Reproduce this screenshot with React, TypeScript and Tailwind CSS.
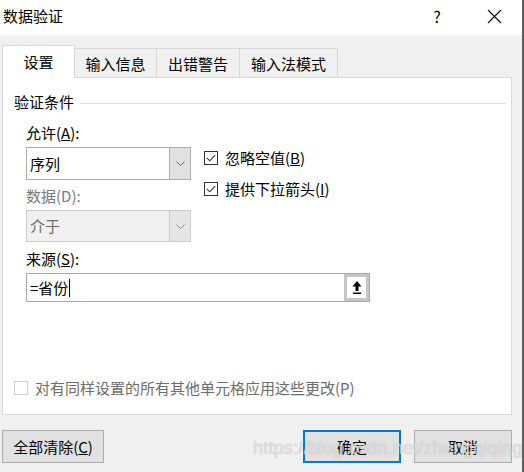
import React from "react"

function Check({ checked, disabled }: { checked?: boolean; disabled?: boolean }) {
  return (
    <span
      className={`w-[14px] h-[14px] shrink-0 border flex items-center justify-center ${
        disabled ? "border-[#cccccc] bg-white" : "border-[#333333] bg-white"
      }`}
    >
      {checked && (
        <svg width="10" height="8" viewBox="0 0 10 8">
          <path d="M0.8 3.8 L3.8 6.8 L9.2 1.2" fill="none" stroke="#333333" strokeWidth="1.1" />
        </svg>
      )}
    </span>
  )
}

function Select({ value, disabled }: { value: string; disabled?: boolean }) {
  return (
    <div
      className={`flex w-[165px] border ${
        disabled ? "h-[32px] border-[#cccccc] bg-[#f0f0f0] text-[#6d6d6d]" : "h-[33px] border-[#adadad] bg-white text-black"
      }`}
    >
      <div className="flex-1 flex items-center pl-[3px]">{value}</div>
      <div
        className={`w-[21px] flex items-center justify-center border-l ${
          disabled ? "border-[#cccccc] bg-[#e6e6e6]" : "border-[#adadad] bg-[#e1e1e1]"
        }`}
      >
        <svg width="9" height="5" viewBox="0 0 9 5">
          <path d="M0.5 0.5 L4.5 4.5 L8.5 0.5" fill="none" stroke={disabled ? "#8a8a8a" : "#606060"} strokeWidth="1" />
        </svg>
      </div>
    </div>
  )
}

function Button({ children, primary, w }: { children: React.ReactNode; primary?: boolean; w: string }) {
  return (
    <div
      className={`${w} h-[33px] flex items-center justify-center bg-[#e1e1e1] ${
        primary ? "border-2 border-[#0078d7]" : "border border-[#adadad]"
      }`}
    >
      {children}
    </div>
  )
}

export default function App() {
  return (
    <div className="relative w-[524px] h-[472px] bg-[#f0f0f0] flex flex-col border-r-2 border-[#5f5f5f] font-['Noto_Sans_CJK_SC',sans-serif] text-[15px] leading-[20px] text-black overflow-hidden">
      {/* title bar */}
      <div className="h-[35px] bg-white flex items-center pl-[3px] pr-[20px]">
        <span className="flex-1 pb-[3px]">数据验证</span>
        <span className="w-[14px] text-center text-[16px] pb-[3px] mr-[43px]">?</span>
        <svg width="15" height="15" viewBox="0 0 15 15" className="mb-[2px]">
          <path d="M1 1 L14 14 M14 1 L1 14" stroke="#111111" strokeWidth="1.1" />
        </svg>
      </div>

      {/* tabs */}
      <div className="flex items-end pl-[2px] mt-[10px] h-[33px] relative z-10">
        <div className="w-[73px] h-[33px] bg-white border border-b-0 border-[#d9d9d9] flex items-center justify-center pb-[1px]">
          设置
        </div>
        <div className="w-[82px] h-[30px] border border-l-0 border-[#d9d9d9] bg-[#f0f0f0] flex items-center justify-center pt-[1px]">
          输入信息
        </div>
        <div className="w-[83px] h-[30px] border border-l-0 border-[#d9d9d9] bg-[#f0f0f0] flex items-center justify-center pt-[1px]">
          出错警告
        </div>
        <div className="w-[98px] h-[30px] border border-l-0 border-[#d9d9d9] bg-[#f0f0f0] flex items-center justify-center pt-[1px]">
          输入法模式
        </div>
      </div>

      {/* panel */}
      <div className="ml-[2px] w-[510px] h-[338px] -mt-px bg-white border border-[#d9d9d9] flex flex-col">
        <div className="mt-[14px] flex items-center pl-[11px] pr-[5px]">
          <span>验证条件</span>
          <div className="flex-1 h-px bg-[#dcdcdc] ml-[6px] mt-[2px]" />
        </div>

        <div className="pl-[23px] flex">
          <div className="flex flex-col w-[165px]">
            <div className="mt-[11px]">
              允许(<u>A</u>):
            </div>
            <div className="mt-[4px]">
              <Select value="序列" />
            </div>
            <div className="mt-[6px] text-[#7a7a7a]">数据(D):</div>
            <div className="mt-[4px]">
              <Select value="介于" disabled />
            </div>
          </div>
          <div className="flex flex-col ml-[13px] mt-[36px] gap-[11px]">
            <div className="flex items-center gap-[7px]">
              <Check checked />
              <span>
                忽略空值(<u>B</u>)
              </span>
            </div>
            <div className="flex items-center gap-[7px]">
              <Check checked />
              <span>
                提供下拉箭头(<u>I</u>)
              </span>
            </div>
          </div>
        </div>

        <div className="pl-[23px] mt-[7px]">
          来源(<u>S</u>):
        </div>
        <div className="ml-[23px] mt-[4px] w-[344px] h-[29px] border border-[#a8a8a8] flex">
          <div className="flex-1 flex items-center pl-[3px]">
            <span>=省份</span>
            <span className="w-px h-[18px] bg-black ml-[1px]" />
          </div>
          <div className="w-[25px] bg-[#c6c6c6] p-[3px]">
            <div className="w-full h-full bg-white flex items-center justify-center">
              <svg width="10" height="15" viewBox="0 0 10 15">
                <path d="M5 1 L9.5 6.5 H6.5 V11 H3.5 V6.5 H0.5 Z" fill="#000000" />
                <rect x="1" y="12.5" width="8" height="1.5" fill="#000000" />
              </svg>
            </div>
          </div>
        </div>

        <div className="mt-auto mb-[16px] pl-[11px] flex items-center gap-[7px] text-[#6d6d6d]">
          <Check disabled />
          <span>对有同样设置的所有其他单元格应用这些更改(P)</span>
        </div>
      </div>

      {/* buttons */}
      <div className="flex items-center mt-[15px] pl-[2px]">
        <Button w="w-[102px]">
          全部清除(<u>C</u>)
        </Button>
        <div className="ml-[199px]">
          <Button w="w-[98px]" primary>
            确定
          </Button>
        </div>
        <div className="ml-[13px]">
          <Button w="w-[98px]">取消</Button>
        </div>
      </div>

      {/* watermark */}
      <div className="absolute left-[253px] top-[437px] text-[18px] leading-[22px] tracking-[0.2px] text-white/60 [text-shadow:0_0_1px_rgba(120,120,120,0.6)] font-['Liberation_Sans',sans-serif]">
        https://blog.csdn.net/zhengqiqingqin
      </div>
    </div>
  )
}
